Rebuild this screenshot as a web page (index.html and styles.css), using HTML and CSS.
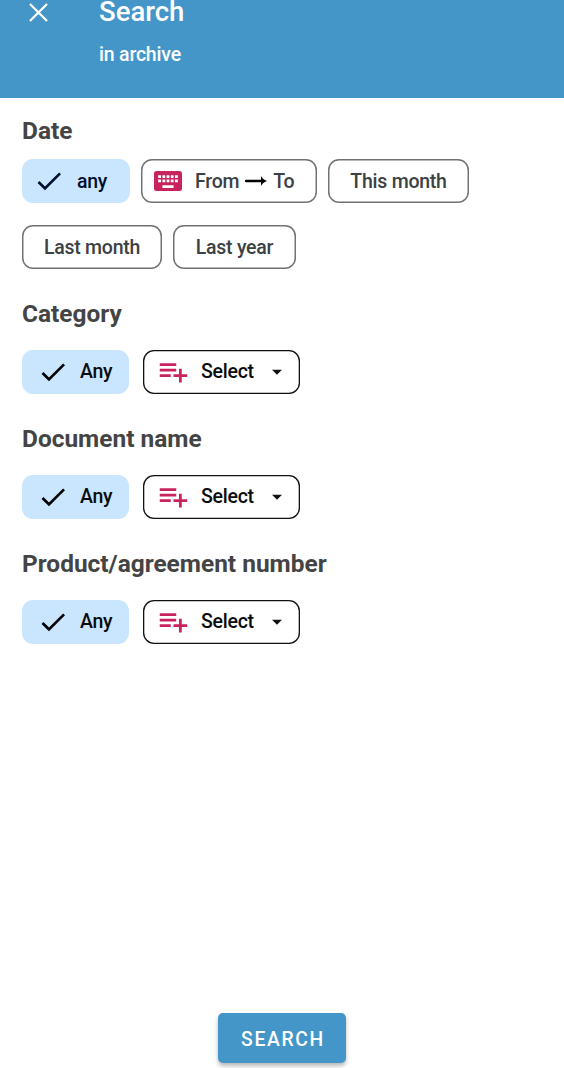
FILE: index.html
```html
<!DOCTYPE html>
<html lang="en">
<head>
<meta charset="utf-8">
<title>Search in archive</title>
<link rel="stylesheet" href="styles.css">
</head>
<body>
<svg width="0" height="0" class="sprite" aria-hidden="true">
  <symbol id="check" viewBox="0 0 24 24"><path d="M9 16.17L4.83 12l-1.42 1.41L9 19 21 7l-1.41-1.41z"/></symbol>
  <symbol id="list-add" viewBox="0 0 24 24"><path d="M14 10H2v2h12v-2zm0-4H2v2h12V6zm4 8v-4h-2v4h-4v2h4v4h2v-4h4v-2h-4zM2 16h8v-2H2v2z"/></symbol>
  <symbol id="caret" viewBox="0 0 24 24"><path d="M7 9.7l5 5 5-5z"/></symbol>
</svg>
<div class="screen">
  <header class="bar">
    <svg class="close" viewBox="0 0 20 20"><path d="M1 1l18 18M19 1L1 19"/></svg>
    <div class="titles">
      <h1 class="title">Search</h1>
      <p class="subtitle">in archive</p>
    </div>
  </header>
  <main class="filters">
    <section class="group">
      <h2 class="heading">Date</h2>
      <div class="dates">
        <button class="chip any-date"><svg class="check"><use href="#check"/></svg><span>any</span></button>
        <button class="chip range">
          <svg class="keyboard" viewBox="0 0 28 20"><path fill-rule="evenodd" d="M2.5 0h23A2.5 2.5 0 0 1 28 2.5v15a2.5 2.5 0 0 1-2.5 2.5h-23A2.5 2.5 0 0 1 0 17.500v-15A2.500 2.500 0 0 1 2.500 0zM4.200 4.300v2.800h2.800v-2.800zM8.400 4.300v2.800h2.800v-2.800zM12.600 4.300v2.800h2.800v-2.800zM16.800 4.300v2.800h2.800v-2.800zM21 4.300v2.800h2.800v-2.800zM4.200 8.500v2.800h2.800v-2.800zM8.400 8.500v2.800h2.800v-2.800zM12.600 8.500v2.800h2.800v-2.800zM16.800 8.500v2.800h2.800v-2.800zM21 8.500v2.800h2.800v-2.800zM8.400 14.200v2.800h11.200v-2.800z"/></svg>
          <span>From</span>
          <svg class="arrow" viewBox="0 0 22 10"><path d="M1 5h17" fill="none" stroke="#000" stroke-width="2.300" stroke-linecap="round"/><path d="M16 0c1 2.200 3 4 6 5-3 1-5 2.800-6 5z"/></svg>
          <span>To</span>
        </button>
        <button class="chip this-month">This month</button>
        <button class="chip last-month">Last month</button>
        <button class="chip last-year">Last year</button>
      </div>
    </section>
    <section class="group">
      <h2 class="heading">Category</h2>
      <div class="options">
        <button class="chip any"><svg class="check"><use href="#check"/></svg><span>Any</span></button>
        <button class="chip select"><svg class="list"><use href="#list-add"/></svg><span>Select</span><svg class="caret"><use href="#caret"/></svg></button>
      </div>
    </section>
    <section class="group">
      <h2 class="heading">Document name</h2>
      <div class="options">
        <button class="chip any"><svg class="check"><use href="#check"/></svg><span>Any</span></button>
        <button class="chip select"><svg class="list"><use href="#list-add"/></svg><span>Select</span><svg class="caret"><use href="#caret"/></svg></button>
      </div>
    </section>
    <section class="group">
      <h2 class="heading">Product/agreement number</h2>
      <div class="options">
        <button class="chip any"><svg class="check"><use href="#check"/></svg><span>Any</span></button>
        <button class="chip select"><svg class="list"><use href="#list-add"/></svg><span>Select</span><svg class="caret"><use href="#caret"/></svg></button>
      </div>
    </section>
  </main>
  <footer class="footer"><button class="submit">SEARCH</button></footer>
</div>
</body>
</html>
```
FILE: styles.css
```css
* { box-sizing: border-box; }
body {
  margin: 0;
  background: #fff;
  font-family: Roboto, "Liberation Sans", sans-serif;
}
h1, h2, p { margin: 0; }
button { margin: 0; font-family: inherit; }
svg { display: block; flex: none; }
.sprite { position: absolute; }
.screen {
  display: flex;
  flex-direction: column;
  height: 1068px;
}
.bar {
  display: flex;
  flex: none;
  height: 98px;
  padding-left: 29px;
  background: #4396c7;
  color: #fff;
}
.close {
  width: 19px;
  height: 19px;
  margin: 3px 51px 0 0;
  fill: none;
  stroke: #fff;
  stroke-width: 2.4;
}
.title { font-size: 27.500px; font-weight: 500; line-height: 24px; }
.subtitle { margin-top: 18px; font-size: 19.500px; font-weight: 500; line-height: 25px; letter-spacing: -.200px; }
.filters { flex: 1; padding: 18px 22px 0; }
.group { margin-bottom: 30px; }
.heading {
  height: 30px;
  color: #444;
  font-size: 24.450px;
  font-weight: 700;
  line-height: 30px;
}
.dates { display: flex; flex-wrap: wrap; gap: 22px 11px; margin-top: 13px; }
.options { display: flex; gap: 13.500px; margin: 21px 0 0 -0.500px; }
.chip {
  display: flex;
  align-items: center;
  justify-content: center;
  height: 44px;
  padding: 0;
  border: 0;
  border-radius: 11px;
  background: #fff;
  box-shadow: inset 0 0 0 1.500px #6f7376;
  color: #3c4144;
  font-size: 19.500px;
  font-weight: 500;
  letter-spacing: -.250px;
  white-space: nowrap;
}
.check { width: 32px; height: 32px; }
.any-date, .any {
  justify-content: flex-start;
  box-shadow: none;
  background: #cae6ff;
}
.any-date { gap: 12px; width: 107.500px; padding-left: 11px; color: #001030; fill: #001030; }
.any { gap: 11px; width: 107.500px; padding: 0 0 1px 15.400px; color: #0a0c0e; fill: #000; }
.range { justify-content: flex-start; width: 176.500px; padding-left: 13.500px; }
.keyboard { width: 28px; height: 20px; margin-right: 13px; fill: #c8235f; }
.arrow { width: 22px; height: 10px; margin: 0 6px; }
.this-month { width: 141px; }
.last-month { width: 140px; }
.last-year { width: 123px; }
.select {
  justify-content: flex-start;
  width: 157.500px;
  padding: 0 0 1px 14.500px;
  box-shadow: inset 0 0 0 1.300px #111;
  color: #0a0c0e;
}
.list { width: 33px; height: 33px; margin-right: 11px; fill: #c8235f; }
.caret { width: 24px; height: 24px; margin-left: 11.500px; fill: #111; }
.footer { display: flex; flex: none; justify-content: center; height: 55px; }
.submit {
  width: 128px;
  height: 50px;
  padding: 2px 0 0 2px;
  border: 0;
  border-radius: 5px;
  background: #4396c7;
  box-shadow: 0 3px 4px rgba(0, 0, 0, .28);
  color: #fff;
  font-size: 19.300px;
  font-weight: 500;
  letter-spacing: 1.700px;
}
```
